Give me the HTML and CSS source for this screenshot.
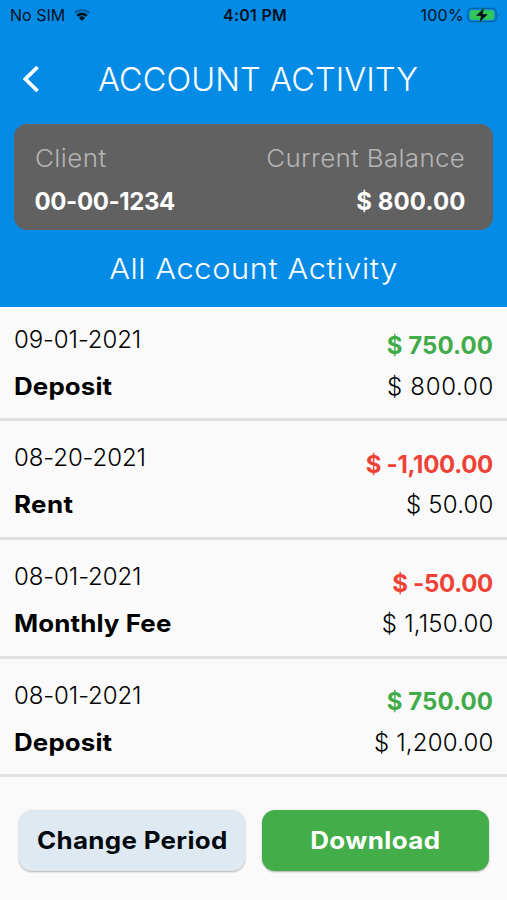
FILE: index.html
```
<!DOCTYPE html>
<html lang="en">
<head>
<meta charset="utf-8">
<title>Account Activity</title>
<link rel="stylesheet" href="styles.css">
</head>
<body>
<header class="header">
  <div class="status">
    <div class="status-left">
      <span class="carrier">No SIM</span>
      <svg class="wifi" width="18" height="14" viewBox="0 0 18 14">
        <path d="M0.8 4.3a12 12 0 0 1 16.4 0l-1.7 1.8a9.6 9.6 0 0 0-13 0z" fill="#0462a3"/>
        <path d="M3.3 6.9a8.4 8.4 0 0 1 11.4 0l-1.7 1.8a5.9 5.9 0 0 0-8 0z" fill="#03121d"/>
        <path d="M5.9 9.7a4.7 4.7 0 0 1 6.2 0L9 12.9z" fill="#03121d"/>
      </svg>
    </div>
    <span class="clock">4:01 PM</span>
    <div class="status-right">
      <span class="percent">100%</span>
      <svg class="battery" width="33" height="16" viewBox="0 0 33 16">
        <rect x="0.8" y="1.3" width="28.4" height="13.4" rx="4" fill="none" stroke="#0462a3" stroke-width="1.3"/>
        <rect x="2.8" y="3.2" width="24.4" height="9.6" rx="2.2" fill="#34c759"/>
        <path d="M31 5.8q1.7 2.2 0 4.4z" fill="#0462a3"/>
        <path d="M17.4 0.4L8.6 9h5.2l-1.5 6.8L21.2 7h-5.4z" fill="#03121d" stroke="#34c759" stroke-width="0.4"/>
      </svg>
    </div>
  </div>
  <div class="titlebar">
    <svg class="back" width="18" height="28" viewBox="0 0 18 28">
      <path d="M15.6 2L3.4 14l12.2 12" fill="none" stroke="#fff" stroke-width="3.8"/>
    </svg>
    <h1 class="title">ACCOUNT ACTIVITY</h1>
  </div>
  <section class="card">
    <div class="card-col">
      <span class="label label-client">Client</span>
      <span class="value value-id">00-00-1234</span>
    </div>
    <div class="card-col card-end">
      <span class="label label-balance">Current Balance</span>
      <span class="value">$ 800.00</span>
    </div>
  </section>
  <h2 class="subtitle">All Account Activity</h2>
</header>
<main class="list">
  <article class="row">
    <div class="info"><span class="date">09-01-2021</span><span class="kind">Deposit</span></div>
    <div class="sums"><span class="amount credit">$ 750.00</span><span class="balance balance-short">$ 800.00</span></div>
  </article>
  <article class="row">
    <div class="info"><span class="date">08-20-2021</span><span class="kind kind-rent">Rent</span></div>
    <div class="sums"><span class="amount debit">$ -1,100.00</span><span class="balance">$ 50.00</span></div>
  </article>
  <article class="row">
    <div class="info"><span class="date">08-01-2021</span><span class="kind">Monthly Fee</span></div>
    <div class="sums"><span class="amount debit">$ -50.00</span><span class="balance">$ 1,150.00</span></div>
  </article>
  <article class="row">
    <div class="info"><span class="date">08-01-2021</span><span class="kind">Deposit</span></div>
    <div class="sums"><span class="amount credit">$ 750.00</span><span class="balance">$ 1,200.00</span></div>
  </article>
</main>
<footer class="actions">
  <button class="btn btn-period"><span class="btn-text">Change Period</span></button>
  <button class="btn btn-download"><span class="btn-text">Download</span></button>
</footer>
</body>
</html>
```
FILE: styles.css
```
* { box-sizing: border-box; }
body {
  margin: 0;
  width: 507px;
  height: 900px;
  overflow: hidden;
  background: #fafafa;
  color: #000;
  font: 300 24px/30px Inter, "Liberation Sans", sans-serif;
  white-space: nowrap;
}
.header {
  height: 307px;
  background: #048be6;
  color: #fff;
}
.status {
  display: grid;
  grid-template-columns: 1fr auto 1fr;
  align-items: center;
  height: 30px;
  padding: 0 7px 0 10px;
  color: #03121d;
  font-size: 16px;
  font-weight: 400;
}
.status-left, .status-right { display: flex; align-items: center; }
.status-left { gap: 8px; }
.status-right { justify-content: flex-end; gap: 3px; }
.clock { font-weight: 600; letter-spacing: 0.25px; }
.percent { letter-spacing: 0.3px; }
.titlebar {
  display: flex;
  align-items: center;
  height: 94px;
  padding: 6px 0 0 21.5px;
}
.back { margin-top: -2px; }
.title {
  margin: 0 0 0 58.5px;
  font-size: 32.5px;
  font-weight: 300;
  line-height: 40px;
  letter-spacing: 0.1px;
}
.card {
  display: flex;
  justify-content: space-between;
  height: 106px;
  margin: 0 14px;
  padding: 19.5px 27.5px 0 20.5px;
  border-radius: 13px;
  background: #616161;
}
.card-col { display: flex; flex-direction: column; gap: 13px; }
.card-end { align-items: flex-end; }
.label {
  color: #b5b5b5;
  letter-spacing: 0.4px;
  transform: scaleX(1.08);
  transform-origin: left;
}
.label-balance {
  letter-spacing: 0.3px;
  transform-origin: right;
}
.value { font-weight: 700; letter-spacing: 0.12px; }
.value-id { letter-spacing: -0.4px; }
.subtitle {
  margin: 21px 0 0;
  font-size: 28px;
  font-weight: 300;
  line-height: 36px;
  letter-spacing: 0.55px;
  text-align: center;
  transform: scaleX(1.1);
}
.row {
  display: flex;
  justify-content: space-between;
  height: 118.7px;
  padding: 22px 14px 0;
  border-bottom: 3px solid #e1e1e1;
}
.row:first-child { height: 114.4px; padding-top: 17.6px; }
.info, .sums { display: flex; flex-direction: column; }
.info { gap: 17px; }
.sums { align-items: flex-end; gap: 10.4px; padding-top: 6.6px; }
.date { letter-spacing: -0.1px; }
.kind {
  font-weight: 700;
  letter-spacing: 0.1px;
  transform: scaleX(1.08);
  transform-origin: left;
}
.kind-rent { letter-spacing: 0.35px; }
.amount { font-weight: 700; letter-spacing: 0.08px; }
.credit { color: #41ab4a; }
.debit { color: #ef4136; letter-spacing: -0.3px; }
.balance { letter-spacing: 0.2px; margin-right: -0.6px; }
.balance-short { letter-spacing: 0.7px; margin-right: -1px; }
.actions {
  display: flex;
  gap: 17px;
  padding: 32.5px 18px 0 18.5px;
}
.btn {
  flex: 1;
  height: 61px;
  padding: 1px 0 0;
  border: 0;
  border-radius: 13px;
  font: 700 24px/30px Inter, "Liberation Sans", sans-serif;
  box-shadow: 0 1px 2px rgba(0, 0, 0, 0.3);
}
.btn-text { display: inline-block; transform: scaleX(1.08); }
.btn-period { background: #dfe9f2; color: #03090f; letter-spacing: 0.3px; }
.btn-download { background: #43ad49; color: #fff; letter-spacing: 0.4px; }
```
